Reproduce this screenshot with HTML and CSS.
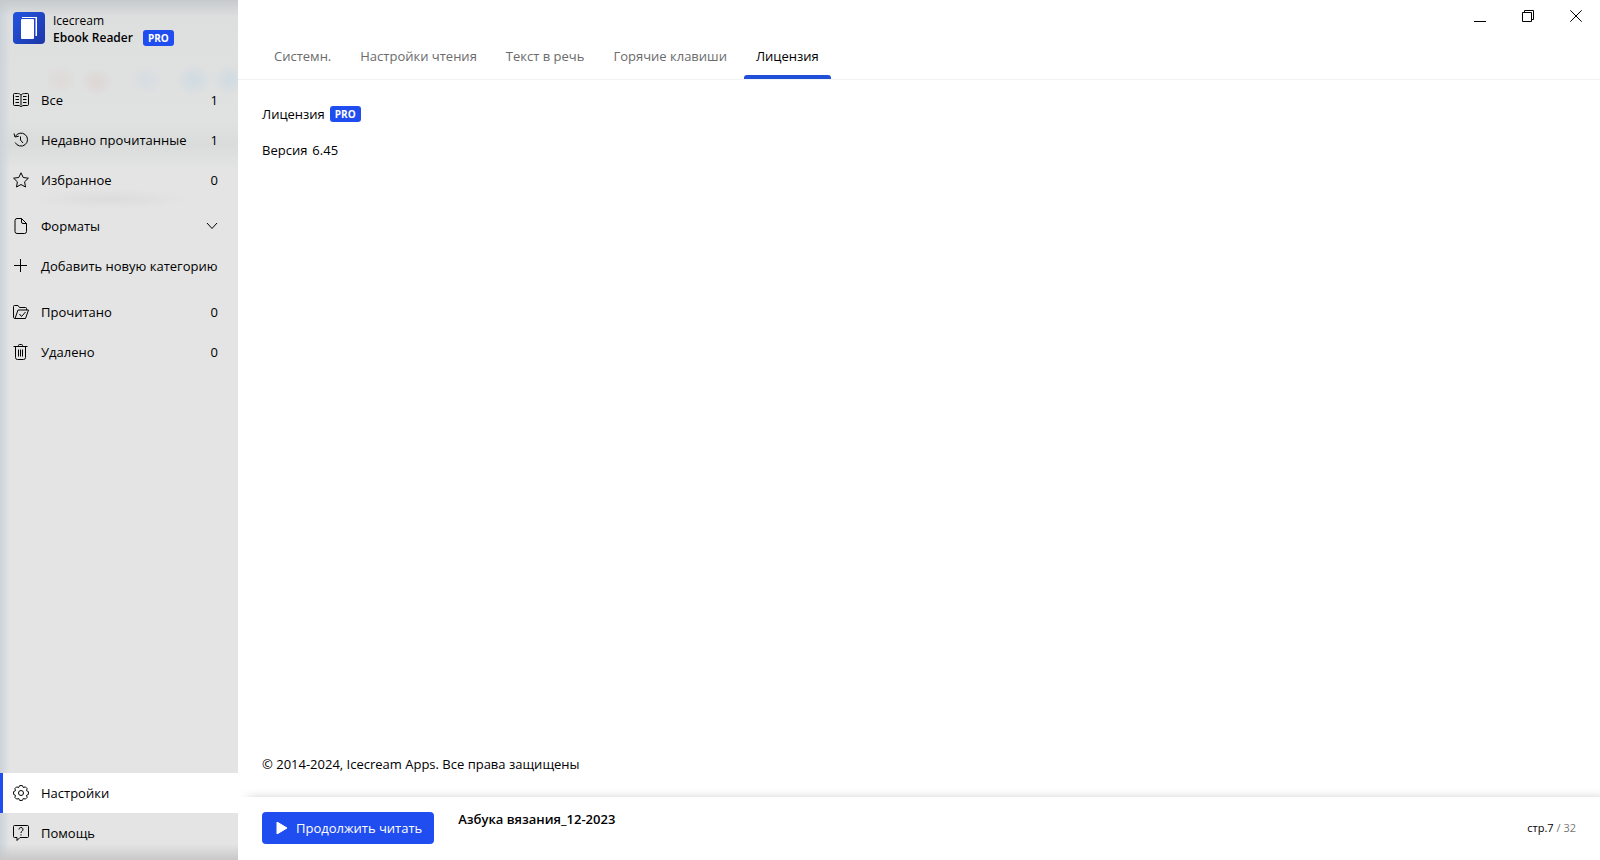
FILE: index.html
```html
<!DOCTYPE html>
<html lang="ru">
<head>
  <meta charset="UTF-8">
  <title>Icecream Ebook Reader</title>
  <link rel="stylesheet" href="styles.css">
</head>
<body>
  <aside class="sidebar">
    <div class="brand">
      <svg class="logo" viewBox="0 0 32 32">
        <defs>
          <linearGradient id="logo-bg" x1="0" y1="0" x2="1" y2="1">
            <stop offset="0" stop-color="#2454e0"/>
            <stop offset="1" stop-color="#1d37a8"/>
          </linearGradient>
        </defs>
        <rect width="32" height="32" rx="4" fill="url(#logo-bg)"/>
        <path d="M9 5H24V24H22.500V6H9z" fill="#fff"/>
        <rect x="8" y="7" width="13" height="20" rx="1" fill="#fff"/>
      </svg>
      <div class="brand-text">
        <span>Icecream</span>
        <span class="brand-name"><b>Ebook Reader</b><span class="badge">PRO</span></span>
      </div>
    </div>

    <nav class="menu">
      <a class="item" href="#all">
        <svg class="icon" viewBox="0 0 16 16"><path d="M8 3v10.500M8 3C7 2 6 1.500 4.500 1.500h-3a1 1 0 0 0-1 1v10a1 1 0 0 0 1 1H5c1.500 0 2.500.5 3 1.500.500-1 1.500-1.500 3-1.500h3.500a1 1 0 0 0 1-1v-10a1 1 0 0 0-1-1h-3C10 1.500 9 2 8 3zM2.500 4.500h3.500M2.500 7.500h3.500M2.500 10.500h3.500M10 4.500h3.500M10 7.500h3.500M10 10.500h3.500"/></svg>
        <span>Все</span><span class="count">1</span>
      </a>
      <a class="item" href="#recent">
        <svg class="icon" viewBox="0 0 16 16"><path d="M2.300 4.500A6.500 6.500 0 1 1 2.200 10.500M1 1.500L2 5l3.800-.8M7.500 4.500V8l2.500 3"/></svg>
        <span>Недавно прочитанные</span><span class="count">1</span>
      </a>
      <a class="item" href="#favorites">
        <svg class="icon" viewBox="0 0 16 16"><path d="M8 .8l2.200 4.700 5.200.7-3.800 3.600.9 5.200L8 12.500 3.500 15l.9-5.200L.6 6.200l5.200-.7z"/></svg>
        <span>Избранное</span><span class="count">0</span>
      </a>
      <a class="item group" href="#formats">
        <svg class="icon" viewBox="0 0 16 16"><path d="M8.500.5H4a2 2 0 0 0-2 2v11a2 2 0 0 0 2 2h7.500a2 2 0 0 0 2-2v-8zM8.500.5v3.500a1.500 1.500 0 0 0 1.500 1.500h3.500"/></svg>
        <span>Форматы</span>
        <svg class="chevron" viewBox="0 0 12 12"><path d="M1 3l5 5.500 5-5.500"/></svg>
      </a>
      <a class="item" href="#add">
        <svg class="icon" viewBox="0 0 16 16"><path d="M7.500 1v13M1 7.500h13"/></svg>
        <span>Добавить новую категорию</span>
      </a>
      <a class="item group" href="#read">
        <svg class="icon" viewBox="0 0 16 16"><path d="M2 14.500h10.500l3-8.500H5L2 14.500C1 14.500.5 14 .5 13V2.500a1 1 0 0 1 1-1H5l1.500 2h6a1 1 0 0 1 1 1V6M6.500 10l2 2.500 4-4.500"/></svg>
        <span>Прочитано</span><span class="count">0</span>
      </a>
      <a class="item" href="#deleted">
        <svg class="icon" viewBox="0 0 16 16"><path d="M.5 2.500h14M5.500 2.500v-1a1 1 0 0 1 1-1h2a1 1 0 0 1 1 1v1M2.500 2.500v11a2 2 0 0 0 2 2h6a2 2 0 0 0 2-2v-11M5.500 5.500v7M7.500 5.500v7M9.500 5.500v7"/></svg>
        <span>Удалено</span><span class="count">0</span>
      </a>
    </nav>

    <nav class="menu menu-bottom">
      <a class="item active" href="#settings">
        <svg class="icon" viewBox="0 0 16 16"><path d="M6.600.6H9.400L10.300 2.500L12.400 1.900L14.100 3.600L13.500 5.700L15.400 6.600V9.400L13.500 10.300L14.100 12.400L12.400 14.100L10.300 13.500L9.400 15.400H6.600L5.700 13.500L3.600 14.100L1.900 12.400L2.500 10.300L.6 9.400V6.600L2.500 5.700L1.900 3.600L3.600 1.900L5.700 2.500z" stroke-linejoin="round"/><circle cx="8" cy="8" r="2.500"/></svg>
        <span>Настройки</span>
      </a>
      <a class="item" href="#help">
        <svg class="icon" viewBox="0 0 16 16"><path d="M1.500.5h13a1 1 0 0 1 1 1v10a1 1 0 0 1-1 1H7l-3 3v-3H1.500a1 1 0 0 1-1-1v-10a1 1 0 0 1 1-1zM6 4.500a2 2 0 1 1 3 1.700c-.7.4-1 .8-1 1.800M8 9.300v1.200"/></svg>
        <span>Помощь</span>
      </a>
    </nav>
  </aside>

  <main class="main">
    <div class="titlebar">
      <button type="button" aria-label="Свернуть"><svg viewBox="0 0 12 12"><path d="M0 11.500h12"/></svg></button>
      <button type="button" aria-label="Восстановить"><svg viewBox="0 0 12 12"><path d="M.5 2.500h9v9h-9zM2.500 2.500v-2h9v9h-2"/></svg></button>
      <button type="button" aria-label="Закрыть"><svg viewBox="0 0 12 12"><path d="M.3.3l11.400 11.400M11.700.3L.3 11.700"/></svg></button>
    </div>

    <nav class="tabs">
      <a href="#system">Системн.</a>
      <a href="#reading">Настройки чтения</a>
      <a href="#speech">Текст в речь</a>
      <a href="#hotkeys">Горячие клавиши</a>
      <a class="current" href="#license">Лицензия</a>
    </nav>

    <section class="content">
      <p><span>Лицензия</span><span class="badge">PRO</span></p>
      <p><span>Версия</span><span>6.45</span></p>
      <p class="copyright">© 2014-2024, Icecream Apps. Все права защищены</p>
    </section>

    <footer class="player">
      <button type="button" class="continue">
        <svg viewBox="0 0 12 12"><path d="M1 0l10 6-10 6z"/></svg>
        Продолжить читать
      </button>
      <b class="book">Азбука вязания_12-2023</b>
      <span class="pages">стр.7 <span>/ 32</span></span>
    </footer>
  </main>
</body>
</html>
```

FILE: styles.css
```css
* {
  box-sizing: border-box;
}
body {
  margin: 0;
  display: flex;
  min-height: 100vh;
  font-family: "Open Sans", "Noto Sans", sans-serif;
  font-size: 13px;
  line-height: 20px;
  color: #000;
  background: #fff;
}
a {
  color: inherit;
  text-decoration: none;
}
button {
  font: inherit;
  border: none;
  background: none;
  padding: 0;
}
svg {
  fill: none;
  stroke: #000;
  flex: none;
}

/* sidebar */
.sidebar {
  width: 238px;
  flex: none;
  display: flex;
  flex-direction: column;
  padding-bottom: 7px;
  background:
    radial-gradient(ellipse 18px 16px at 194px 80px, #cfdbe2, transparent),
    radial-gradient(ellipse 16px 16px at 229px 80px, #cfdbe2, transparent),
    radial-gradient(ellipse 16px 14px at 146px 80px, #d6dde2, transparent),
    radial-gradient(ellipse 16px 14px at 97px 82px, #ddd6d4, transparent),
    radial-gradient(ellipse 16px 14px at 60px 80px, #dedad6, transparent),
    radial-gradient(ellipse 80px 10px at 110px 199px, #dcdcdc, transparent),
    linear-gradient(#c6cacd, transparent 16px),
    linear-gradient(to top, #c8c8c8, transparent 16px),
    linear-gradient(to right, #ccd3da, transparent 10px),
    linear-gradient(#dddede, #e0e1e1 120px, #dadcdc 145px, #e4e4e4 170px);
}
.brand {
  display: flex;
  gap: 8px;
  padding: 12px 13px;
  height: 80px;
}
.logo {
  width: 32px;
  height: 32px;
  stroke: none;
}
.brand-text {
  display: flex;
  flex-direction: column;
  font-size: 12px;
  line-height: 17px;
}
.brand-name {
  display: flex;
  align-items: center;
  gap: 10px;
}
.brand-name b {
  font-weight: 600;
}
.badge {
  padding: 0 5px;
  border-radius: 3px;
  background: #1f4df0;
  color: #fff;
  font-size: 10px;
  font-weight: 700;
  line-height: 16px;
}
.item {
  display: flex;
  align-items: center;
  height: 40px;
  padding: 0 20px 0 13px;
}
.item.group {
  margin-top: 6px;
}
.item.active {
  background: #fff;
  box-shadow: inset 3px 0 #1f4df0;
}
.icon {
  width: 16px;
  height: 16px;
  margin-right: 12px;
}
.count,
.chevron {
  margin-left: auto;
}
.chevron {
  width: 12px;
  height: 12px;
}
.menu-bottom {
  margin-top: auto;
}

/* main area */
.main {
  flex: 1;
  display: flex;
  flex-direction: column;
}
.titlebar {
  display: flex;
  justify-content: flex-end;
  height: 32px;
}
.titlebar button {
  width: 48px;
}
.titlebar svg {
  display: block;
  width: 12px;
  height: 12px;
  margin: 0 auto;
}
.tabs {
  display: flex;
  gap: 5px;
  height: 48px;
  padding: 0 24px;
  border-bottom: 1px solid #f0f2f4;
}
.tabs a {
  position: relative;
  padding: 14px 12px;
  color: #6b6b6b;
}
.tabs .current {
  color: #000;
}
.tabs .current::after {
  content: "";
  position: absolute;
  left: 0;
  right: 0;
  bottom: 0;
  height: 4px;
  border-radius: 3px 3px 0 0;
  background: #2150d8;
}
.content {
  flex: 1;
  display: flex;
  flex-direction: column;
  gap: 16px;
  padding: 24px 24px 23px;
}
.content p {
  display: flex;
  align-items: center;
  gap: 5px;
  margin: 0;
}
.content .copyright {
  margin-top: auto;
}
.player {
  display: flex;
  gap: 24px;
  height: 63px;
  padding: 15px 24px;
  background: #fff;
  box-shadow: 8px 0 10px -2px rgba(0,0,0,0.25);
}
.continue {
  display: flex;
  align-items: center;
  gap: 8px;
  height: 32px;
  padding: 0 12px 0 14px;
  border-radius: 4px;
  background: #1f4df0;
  color: #fff;
}
.continue svg {
  width: 12px;
  height: 12px;
  fill: #fff;
  stroke: #fff;
  stroke-linejoin: round;
}
.book {
  line-height: 15px;
  font-weight: 600;
}
.pages {
  margin-left: auto;
  font-size: 11px;
  line-height: 32px;
}
.pages span {
  color: #777;
}
```
